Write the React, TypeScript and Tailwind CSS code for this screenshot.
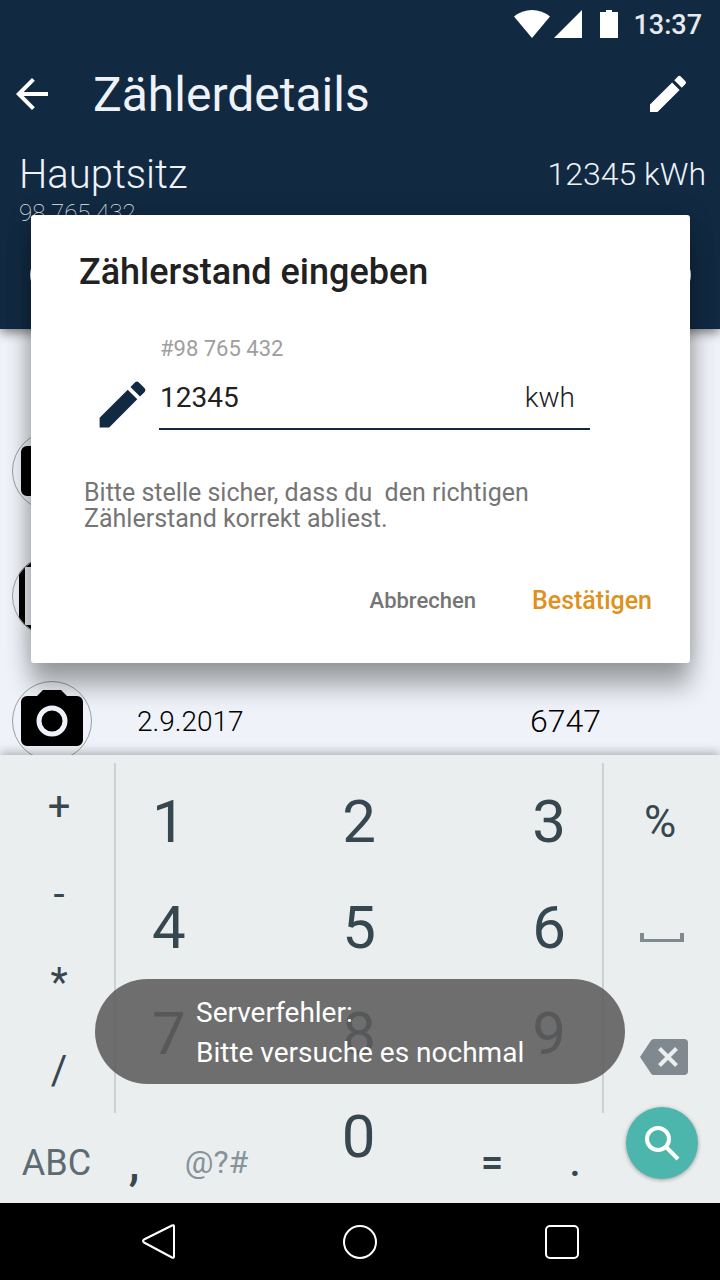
import React, { useState } from "react";

function PencilIcon({ className }: { className: string }) {
  return (
    <svg viewBox="0 0 24 24" fill="currentColor" className={className} aria-hidden="true">
      <path d="M3 17.25V21h3.75L17.81 9.94l-3.75-3.75L3 17.25zM20.71 7.04a.996.996 0 0 0 0-1.41l-2.34-2.34a.996.996 0 0 0-1.41 0l-1.83 1.83 3.75 3.75 1.83-1.83z" />
    </svg>
  );
}

function CameraIcon() {
  return (
    <svg viewBox="0 0 80 80" className="size-20 shrink-0" aria-hidden="true">
      <circle cx="40" cy="40" r="39.5" fill="none" stroke="#9b9ea1" />
      <path d="M15 15h10l6-6h18l6 6h10a6 6 0 0 1 6 6v38a6 6 0 0 1-6 6H15a6 6 0 0 1-6-6V21a6 6 0 0 1 6-6z" />
      <circle cx="40" cy="40" r="13" fill="none" stroke="#eff2f8" strokeWidth="5" />
    </svg>
  );
}

function PhotoIcon() {
  return (
    <svg viewBox="0 0 80 80" className="size-20 shrink-0" aria-hidden="true">
      <clipPath id="photo-clip">
        <circle cx="40" cy="40" r="40" />
      </clipPath>
      <g clipPath="url(#photo-clip)">
        <rect x="7" y="0" width="66" height="80" />
        <rect x="13" y="11" width="54" height="58" fill="#eff2f8" />
      </g>
      <circle cx="40" cy="40" r="39.5" fill="none" stroke="#9b9ea1" />
    </svg>
  );
}

function StatusBar() {
  return (
    <div className="flex h-12 items-center justify-end pr-[18px] text-white">
      <svg viewBox="0 0 104 28" fill="currentColor" className="h-7 w-[104px]" aria-hidden="true">
        <path d="M0 6.500Q8 0 18 0T36 6.500L18 28z" />
        <path d="M68 0v28H40z" />
        <path d="M86 2h6V0h6v2h6v26H86z" />
      </svg>
      <span className="ml-[15px] pt-0.5 text-[27px] leading-8 font-medium text-[#e7e9ec]">13:37</span>
    </div>
  );
}

function Header() {
  return (
    <header className="relative z-10 shrink-0 bg-[#112a42] text-[#eff2f8] shadow-[0_4px_10px_rgba(0,0,0,0.45)]">
      <StatusBar />
      <div className="flex h-[92px] items-center pr-7 pl-2">
        <button type="button" aria-label="Zurück" className="text-white">
          <svg viewBox="0 0 24 24" fill="currentColor" className="size-12" aria-hidden="true">
            <path d="M20 11H7.83l5.590-5.590L12 4l-8 8 8 8 1.410-1.410L7.830 13H20v-2z" />
          </svg>
        </button>
        <h1 className="ml-[37px] flex-1 pt-0.5 text-[48px] leading-[58px]">Zählerdetails</h1>
        <button type="button" aria-label="Bearbeiten" className="text-white">
          <PencilIcon className="size-12" />
        </button>
      </div>
      <div className="pt-[11px] pr-[14px] pb-[34px] pl-[19px]">
        <div className="flex items-start justify-between font-light">
          <h2 className="text-[40px] leading-[48px]">Hauptsitz</h2>
          <span className="text-[32px] leading-[46px]">12345 kWh</span>
        </div>
        <p className="text-[24px] leading-[28px] font-thin">98 765 432</p>
        <div className="mt-7 pr-[15px] pl-[11px]">
          <div className="h-10 rounded-full bg-white" />
        </div>
      </div>
    </header>
  );
}

function Readings() {
  return (
    <main className="min-h-0 flex-1 overflow-hidden bg-[#eff2f8] pt-[79px]">
      <ul>
        <li className="flex h-[125px] items-center pl-3">
          <CameraIcon />
        </li>
        <li className="flex h-[125px] items-center pl-3">
          <PhotoIcon />
        </li>
        <li className="flex h-[126px] items-center pr-[119px] pl-3 font-light text-black">
          <CameraIcon />
          <span className="ml-[45px] flex-1 pt-0.5 text-[28px]">2.9.2017</span>
          <span className="text-[32px] leading-[46px]">6747</span>
        </li>
      </ul>
    </main>
  );
}

function ReadingDialog() {
  const [value, setValue] = useState("12345");
  return (
    <div
      role="dialog"
      aria-labelledby="dialog-title"
      className="absolute top-[215px] right-[30px] left-[31px] z-20 rounded-[3px] bg-white pt-9 pb-11 shadow-[0_24px_24px_rgba(0,0,0,0.3),0_0_24px_rgba(0,0,0,0.2)]"
    >
      <h2 id="dialog-title" className="pl-12 text-[36px] leading-[42px] font-medium text-[#212121]">
        Zählerstand eingeben
      </h2>
      <div className="mt-[42px] flex items-end gap-1.5 pr-[100px] pl-[61px]">
        <PencilIcon className="-mb-[5px] size-[61px] shrink-0 text-[#112a42]" />
        <div className="min-w-0 flex-1">
          <label htmlFor="reading" className="block pl-px text-[22px] leading-7 text-[#9e9e9e]">
            #98 765 432
          </label>
          <div className="mt-[3px] flex h-16 items-center border-b-2 border-[#112a42] pt-0.5 pr-[15px] pl-px text-[28px] text-[#212121]">
            <input
              id="reading"
              type="text"
              inputMode="numeric"
              value={value}
              onChange={(e) => setValue(e.target.value)}
              className="min-w-0 flex-1 bg-transparent outline-none"
            />
            <span className="font-light">kwh</span>
          </div>
        </div>
      </div>
      <p className="mt-[50px] px-[53px] text-[25px] leading-[26px] whitespace-pre-line text-[#757575]">
        Bitte stelle sicher, dass du&nbsp; den richtigen{"\n"}Zählerstand korrekt abliest.
      </p>
      <div className="mt-[51px] flex items-center justify-end gap-14 pr-[38px] leading-9 font-medium">
        <button type="button" className="text-[22px] text-[#757575]">Abbrechen</button>
        <button type="button" className="text-[25px] text-[#de921c]">Bestätigen</button>
      </div>
    </div>
  );
}

const digitRows = [
  ["1", "2", "3"],
  ["4", "5", "6"],
  ["7", "8", "9"],
];

function Keyboard() {
  return (
    <section
      aria-label="Tastatur"
      className="relative z-10 shrink-0 bg-[#ebeeef] pt-2 text-[#37474f] shadow-[0_-2px_10px_rgba(0,0,0,0.3)]"
    >
      <div className="flex h-[350px]">
        <div className="grid h-[352px] w-[114px] grid-rows-4 pl-1 text-[40px]">
          {["+", "-", "*", "/"].map((k) => (
            <button key={k} type="button">{k}</button>
          ))}
        </div>
        <div className="flex-1 border-x-2 border-[#cdd1d3] px-9 pt-1.5">
          {digitRows.map((row) => (
            <div key={row[0]} className="flex h-[106px] items-center justify-between text-[60px]">
              {row.map((d) => (
                <button key={d} type="button">{d}</button>
              ))}
            </div>
          ))}
        </div>
        <div className="grid w-[116px] grid-rows-[116px_116px_124px] place-items-center">
          <button type="button" className="pt-0.5 pr-1 text-[44px]">%</button>
          <button type="button" aria-label="Leerzeichen">
            <svg viewBox="0 0 44 9" className="h-[9px] w-11" aria-hidden="true">
              <path d="M0 0h4v6h36V0h4v9H0z" fill="#808b90" />
            </svg>
          </button>
          <button type="button" aria-label="Löschen">
            <svg viewBox="0 0 48 36" className="ml-1 h-9 w-12" aria-hidden="true">
              <path d="M14 0h30a4 4 0 0 1 4 4v28a4 4 0 0 1-4 4H14q-2 0-3-1.500L0 18 11 1.500Q12 0 14 0z" fill="#808990" />
              <path d="M19.500 9.500l17 17M36.500 9.500l-17 17" stroke="#ebeeef" strokeWidth="4" />
            </svg>
          </button>
        </div>
      </div>
      <div className="grid h-[90px] grid-cols-[113fr_42fr_123fr_161fr_106fr_60fr_115fr] items-start justify-items-center leading-[48px]">
        <button type="button" className="mt-[26px] text-[36px] text-[#5d6b72]">ABC</button>
        <button type="button" className="mt-[26px] text-[48px] font-medium">,</button>
        <button type="button" className="mt-[25px] text-[32px] text-[#87939a]">@?#</button>
        <button type="button" className="text-[60px]">0</button>
        <button type="button" className="mt-[26px] text-[40px] font-medium">=</button>
        <button type="button" className="mt-[26px] text-[40px] font-medium">.</button>
        <button
          type="button"
          aria-label="Suchen"
          className="-mt-1.5 mr-0.5 flex size-[72px] items-center justify-center rounded-full bg-[#4db6ac] shadow-[0_1px_4px_rgba(0,0,0,0.35)]"
        >
          <svg viewBox="0 0 36 36" fill="none" stroke="#fff" strokeWidth="4" className="size-9" aria-hidden="true">
            <circle cx="14" cy="14" r="11" />
            <path d="M22 22l12 12" />
          </svg>
        </button>
      </div>
    </section>
  );
}

function Toast() {
  return (
    <div
      role="alert"
      className="absolute right-[95px] bottom-[196px] left-[95px] z-20 rounded-full bg-[#5b5b5b]/87 pt-[14px] pr-20 pb-[11px] pl-[101px] text-[28px] leading-10 text-white"
    >
      <p>Serverfehler:</p>
      <p>Bitte versuche es nochmal</p>
    </div>
  );
}

function NavigationBar() {
  return (
    <nav className="relative z-10 grid h-[77px] shrink-0 grid-cols-3 place-items-center bg-black px-[57px]">
      <button type="button" aria-label="Zurück">
        <svg viewBox="0 0 36 36" fill="none" stroke="#fff" strokeWidth="2" strokeLinejoin="round" className="size-9" aria-hidden="true">
          <path d="M32 1.500Q34 .5 34 2.500v30Q34 34.500 32 33.500L4 18.500Q2 17 4 15.500z" />
        </svg>
      </button>
      <button type="button" aria-label="Startseite">
        <svg viewBox="0 0 36 36" fill="none" stroke="#fff" strokeWidth="2" className="size-9" aria-hidden="true">
          <circle cx="18" cy="18" r="16" />
        </svg>
      </button>
      <button type="button" aria-label="Übersicht">
        <svg viewBox="0 0 36 36" fill="none" stroke="#fff" strokeWidth="2" className="size-9" aria-hidden="true">
          <rect x="2" y="2" width="32" height="32" rx="4" />
        </svg>
      </button>
    </nav>
  );
}

export default function App() {
  return (
    <div className="relative flex h-screen flex-col overflow-hidden bg-[#eff2f8] font-[Roboto,sans-serif]">
      <Header />
      <Readings />
      <ReadingDialog />
      <Keyboard />
      <Toast />
      <NavigationBar />
    </div>
  );
}
